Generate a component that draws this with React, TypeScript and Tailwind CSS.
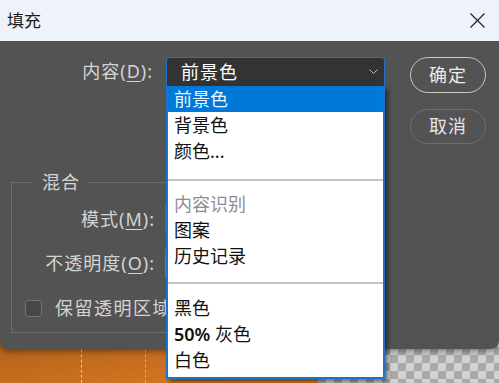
import React from 'react';

const font = "font-['Noto_Sans','Noto_Sans_CJK_SC',sans-serif]";

function MenuItem({ children, active, disabled }: { children: React.ReactNode; active?: boolean; disabled?: boolean }) {
  return (
    <div
      className={`h-[26px] flex items-center px-[6px] text-[18px] leading-none ${
        active ? 'bg-[#0078d7] text-[#eaf4ff]' : disabled ? 'text-[#8e8a94]' : 'text-[#111]'
      }`}
    >
      {children}
    </div>
  );
}

function App() {
  return (
    <div className={`relative w-[499px] h-[383px] overflow-hidden bg-[#535353] ${font}`}>
      <div className="relative z-10 shadow-[0_2px_6px_rgba(0,0,0,0.45)] rounded-b-[8px]">
        {/* title bar */}
        <div className="h-[41px] bg-[#eef2f9] flex items-center justify-between pl-[7px] pr-[14px]">
          <span className="text-[17px] text-[#1a1a1a]">填充</span>
          <svg width="15" height="15" viewBox="0 0 15 15" className="text-[#222]">
            <path d="M0.5 0.5 L14.5 14.5 M14.5 0.5 L0.5 14.5" stroke="currentColor" strokeWidth="1.2" fill="none" />
          </svg>
        </div>

        {/* body */}
        <div className="h-[308px] bg-[#535353] rounded-b-[8px] flex text-[#d4d4d4] text-[18px] tracking-[1px]">
          <div className="w-[385px] pt-[16px]">
            <div className="flex items-center h-[29px]">
              <div className="w-[153px] text-right">
                内容(<span className="underline underline-offset-[3px]">D</span>):
              </div>
              <div className="relative ml-[13px] w-[219px] h-[29px] tracking-normal">
                <div className="h-full bg-[#333333] border border-[#1d73c9] border-b-0 rounded-t-[3px] flex items-center justify-between pl-[14px] pr-[6px]">
                  <span className="text-white tracking-[1px]">前景色</span>
                  <svg width="9" height="6" viewBox="0 0 9 6">
                    <path d="M0.5 0.5 L4.5 4.5 L8.5 0.5" stroke="#bdbdbd" strokeWidth="1" fill="none" />
                  </svg>
                </div>

                {/* open dropdown */}
                <div className="absolute z-20 left-0 top-[29px] w-[219px] bg-white border-x-2 border-b-2 border-[#1d73c9] pb-[4px] shadow-[3px_3px_4px_rgba(0,0,0,0.45)]">
                  <MenuItem active>前景色</MenuItem>
                  <MenuItem>背景色</MenuItem>
                  <MenuItem>颜色...</MenuItem>
                  <div className="h-[2px] bg-[#c4c4c4] mt-[15px] mb-[10px]" />
                  <MenuItem disabled>内容识别</MenuItem>
                  <MenuItem>图案</MenuItem>
                  <MenuItem>历史记录</MenuItem>
                  <div className="h-[2px] bg-[#c4c4c4] mt-[13px] mb-[11px]" />
                  <MenuItem>黑色</MenuItem>
                  <MenuItem>
                    <span className="font-semibold">50%</span>&nbsp;灰色
                  </MenuItem>
                  <MenuItem>白色</MenuItem>
                </div>
              </div>
            </div>

            {/* blend group */}
            <div className="relative ml-[11px] mt-[96px] w-[369px] h-[151px] border border-[#6c6c6c] pt-[22px]">
              <span className="absolute left-[21px] -top-[13px] px-[9px] bg-[#535353] leading-[24px]">混合</span>
              <div className="flex items-center h-[29px]">
                <div className="w-[143px] text-right">
                  模式(<span className="underline underline-offset-[3px]">M</span>):
                </div>
                <div className="ml-[10px] w-[150px] h-[29px] bg-[#454545] border border-[#666]" />
              </div>
              <div className="flex items-center h-[29px] mt-[15px]">
                <div className="w-[143px] text-right">
                  不透明度(<span className="underline underline-offset-[3px]">O</span>):
                </div>
                <div className="ml-[10px] w-[80px] h-[29px] bg-[#454545] border border-[#777]" />
              </div>
              <div className="flex items-center mt-[17px] ml-[13px]">
                <div className="w-[17px] h-[17px] rounded-[3px] border border-[#737373] bg-[#474747]" />
                <span className="ml-[13px] whitespace-nowrap tracking-[1.5px]">保留透明区域</span>
              </div>
            </div>
          </div>

          {/* buttons */}
          <div className="ml-[25px] pt-[16px] flex flex-col gap-[16px]">
            <button className="w-[76px] h-[36px] rounded-full border-[1.5px] border-[#c9c9c9] text-[#ececec] tracking-[1px]">
              确定
            </button>
            <button className="w-[76px] h-[35px] rounded-full border-[1.5px] border-[#6f6f6f] text-[#e4e4e4] tracking-[1px]">
              取消
            </button>
          </div>
        </div>
      </div>

      {/* canvas below the dialog */}
      <div className="relative -mt-[10px] h-[44px] flex">
        <div className="relative w-[318px] h-full bg-[linear-gradient(170deg,#b0601a,#c86f1f_50%,#db7c24)]">
          <div className="absolute left-[81px] top-0 h-full border-l border-dashed border-white/60" />
          <div className="absolute left-[145px] top-0 h-full border-l border-dashed border-white/40" />
        </div>
        <div className="flex-1 h-full bg-[image:repeating-conic-gradient(#a9a9a9_0%_25%,#d2d2d2_0%_50%)] bg-[length:16px_16px]" />
      </div>
    </div>
  );
}

export default App;
